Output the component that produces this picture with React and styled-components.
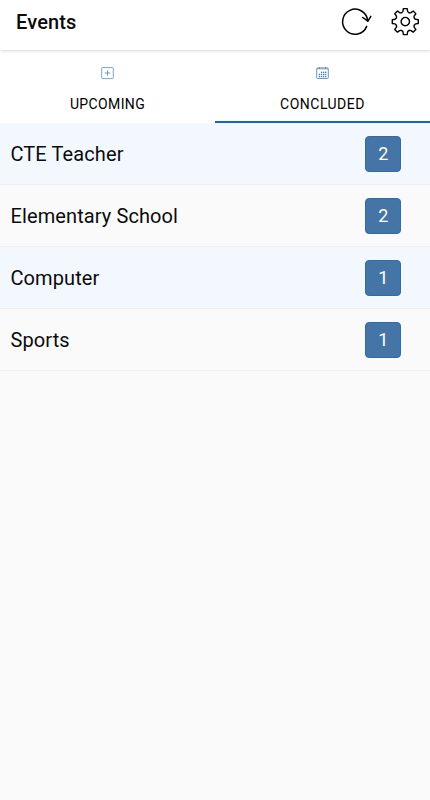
import React from "react";
import styled, { createGlobalStyle } from "styled-components";

const GlobalStyle = createGlobalStyle`
  * { box-sizing: border-box; }
  body { margin: 0; background: #fafafa; font-family: Roboto, "Liberation Sans", sans-serif; color: #0b0b0b; }
`;

const Screen = styled.div`
  display: flex;
  flex-direction: column;
  min-height: 800px;
`;

const Header = styled.header`
  display: flex;
  align-items: center;
  justify-content: space-between;
  height: 50px;
  padding: 0 10px 6px 16px;
  background: #fff;
  box-shadow: 0 1px 3px rgba(0, 0, 0, 0.17);
  z-index: 1;
`;

const Title = styled.h1`
  margin: 0;
  font-size: 20px;
  line-height: 24px;
  font-weight: 500;
  letter-spacing: 0.15px;
`;

const Actions = styled.div`
  display: flex;
  gap: 20px;
`;

const IconButton = styled.button`
  display: flex;
  width: 30px;
  height: 30px;
  padding: 0;
  border: 0;
  background: none;
  color: #000;
`;

const Tabs = styled.nav`
  display: grid;
  grid-template-columns: 1fr 1fr;
  height: 73px;
  background: #fff;
`;

const Tab = styled.button`
  display: flex;
  flex-direction: column;
  align-items: center;
  gap: 15px;
  padding: 17px 0 0;
  border: 0;
  border-bottom: 2px solid ${(p) => (p.$active ? "#1268be" : "transparent")};
  background: none;
  color: #000;
  font: 400 14px/18px Roboto, "Liberation Sans", sans-serif;
  letter-spacing: ${(p) => p.$spacing};
`;

const List = styled.ul`
  margin: 0;
  padding: 0;
  list-style: none;
`;

const Row = styled.li`
  display: flex;
  align-items: center;
  justify-content: space-between;
  height: 62px;
  padding: 0 28.6px 0 10.5px;
  border-bottom: 1px solid #efefef;
  background: #fafafa;
  font-size: 20px;
  letter-spacing: 0.1px;
  &:nth-child(odd) { background: #f3f8ff; }
`;

const Count = styled.span`
  display: flex;
  align-items: center;
  justify-content: center;
  width: 36px;
  height: 36px;
  border: 1px solid #2f6ba5;
  border-radius: 4px;
  background: #4574a6;
  color: #fff;
  font-size: 18px;
  letter-spacing: 0;
`;

const RefreshIcon = () => (
  <svg width="30" height="30" viewBox="-0.5 0.4 30 30" fill="none" stroke="currentColor" strokeWidth="1.5" strokeLinecap="round" overflow="visible">
    <path d="M26.2 19.8A12.5 12.5 0 1 1 27.1 14.4" />
    <path d="M22.2 10.9l5.2 3.7 2.9-4.8" strokeLinejoin="round" />
  </svg>
);

const toothAngles = [0, 45, 90, 135, 180, 225, 270, 315];

const rotated = (x, y, degrees) => {
  const a = (degrees * Math.PI) / 180;
  const rx = x * Math.cos(a) - y * Math.sin(a);
  const ry = x * Math.sin(a) + y * Math.cos(a);
  return `${rx.toFixed(2)} ${ry.toFixed(2)}`;
};

const gearPath =
  toothAngles
    .map((a, i) => {
      const p = (x, y) => rotated(x, y, a);
      const next = (x, y) => rotated(x, y, a + 45);
      return `${i ? "L" : "M"}${p(-1.9, -13)}L${p(1.9, -13)}L${p(2.3, -10.4)}Q${p(2.5, -9.6)} ${p(3.3, -9.3)}Q${rotated(0, -9.2, a + 22.5)} ${next(-3.3, -9.3)}Q${next(-2.5, -9.6)} ${next(-2.3, -10.4)}`;
    })
    .join("") + "Z";

const GearIcon = () => (
  <svg width="30" height="30" viewBox="-15.3 -14.6 30 30" fill="none" stroke="currentColor" strokeWidth="1.4" strokeLinejoin="round">
    <path d={gearPath} />
    <circle r="4.2" />
  </svg>
);

const AddBoxIcon = () => (
  <svg width="13" height="13" viewBox="0 0 13 13" fill="none" stroke="#6f98c5">
    <rect x="0.7" y="0.6" width="11.6" height="11" rx="0.8" strokeWidth="0.9" />
    <path d="M6.5 3.3v5.4M3.8 6h5.4" />
  </svg>
);

const calendarDays = [
  [4.9, 4.7], [7, 4.7], [9.1, 4.7],
  [2.8, 6.8], [4.9, 6.8], [7, 6.8], [9.1, 6.8],
  [2.8, 8.9], [4.9, 8.9], [7, 8.9], [9.1, 8.9],
];

const CalendarIcon = () => (
  <svg width="13" height="13" viewBox="0 0 13 13" fill="none" stroke="#5b8abb">
    <rect x="0.7" y="0.9" width="11.6" height="10.6" rx="0.8" strokeWidth="0.9" />
    <path d="M1 1.8h11" strokeWidth="1.4" opacity="0.55" />
    <path d="M3.5 0v1.8M9.5 0v1.8" strokeWidth="0.9" />
    {calendarDays.map(([x, y]) => (
      <rect key={`${x}-${y}`} x={x} y={y} width="1.3" height="1.3" fill="#3f76af" stroke="none" />
    ))}
  </svg>
);

const events = [
  { name: "CTE Teacher", count: 2 },
  { name: "Elementary School", count: 2 },
  { name: "Computer", count: 1 },
  { name: "Sports", count: 1 },
];

export default function App() {
  return (
    <Screen>
      <GlobalStyle />
      <Header>
        <Title>Events</Title>
        <Actions>
          <IconButton aria-label="Refresh"><RefreshIcon /></IconButton>
          <IconButton aria-label="Settings"><GearIcon /></IconButton>
        </Actions>
      </Header>
      <Tabs>
        <Tab $spacing="0.38px"><AddBoxIcon />UPCOMING</Tab>
        <Tab $active $spacing="0.5px"><CalendarIcon />CONCLUDED</Tab>
      </Tabs>
      <List>
        {events.map((e) => (
          <Row key={e.name}>
            {e.name}
            <Count>{e.count}</Count>
          </Row>
        ))}
      </List>
    </Screen>
  );
}
